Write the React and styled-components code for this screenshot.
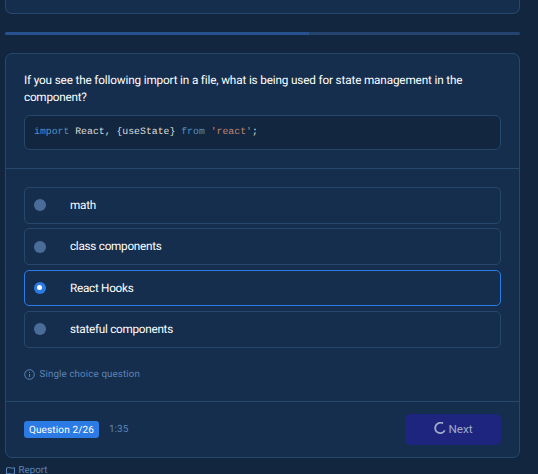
import React from "react";
import styled, { createGlobalStyle } from "styled-components";

const colors = {
  page: "#12263f",
  card: "#152e4d",
  line: "#27486d",
  blue: "#2c7be5",
  muted: "#5c84b8",
};

const GlobalStyle = createGlobalStyle`
  * { box-sizing: border-box; }
  html, body { margin: 0; height: 100%; overflow: hidden; background: ${colors.page}; }
  body { font-family: Roboto, "Liberation Sans", sans-serif; color: #fff; text-rendering: geometricPrecision; }
`;

const Page = styled.main`
  width: 538px;
  height: 474px;
  padding: 0 18px 0 5px;
  background: ${colors.page};
`;

const PreviousCard = styled.div`
  height: 14px;
  border: 1px solid ${colors.line};
  border-top: 0;
  border-radius: 0 0 7px 7px;
  background: ${colors.card};
`;

const Progress = styled.div`
  height: 3px;
  margin: 18px 0;
  border-radius: 2px;
  overflow: hidden;
  background: #24446f;
`;

const ProgressFill = styled.div`
  width: 304px;
  height: 100%;
  background: #28528f;
`;

const Card = styled.section`
  height: 405px;
  border: 1px solid ${colors.line};
  border-radius: 7px;
  background: ${colors.card};
`;

const CardHeader = styled.header`
  height: 115px;
  padding: 18px 18px 0;
  border-bottom: 1px solid ${colors.line};
`;

const Question = styled.h1`
  margin: 0 0 9px;
  font-size: 11.75px;
  line-height: 17px;
  font-weight: 400;
  white-space: nowrap;
`;

const Line = styled.span`
  display: block;
  letter-spacing: ${(p) => p.$spacing}px;
`;

const Code = styled.pre`
  margin: 0;
  height: 35px;
  padding: 0 9px;
  border: 1px solid ${colors.line};
  border-radius: 6px;
  background: ${colors.page};
  color: #dcdcdc;
  font: 9.82px/32px "Liberation Mono", monospace;
`;

const Token = styled.span`
  color: ${(p) => (p.$kind === "string" ? "#ce9178" : "#569cd6")};
  opacity: 0.9;
`;

const CardBody = styled.div`
  height: 233px;
  padding: 18px 18px 0;
  border-bottom: 1px solid ${colors.line};
`;

const Options = styled.div`
  display: grid;
  gap: 4.67px;
`;

const Option = styled.label`
  display: flex;
  align-items: center;
  height: 36.67px;
  padding: 0 9px;
  border: 1px solid ${(p) => (p.$selected ? colors.blue : colors.line)};
  border-radius: 5px;
  font-size: 11.75px;
  line-height: 15px;
  letter-spacing: -0.28px;
`;

const OptionText = styled.span`
  margin-top: 0.1px;
`;

const Radio = styled.span`
  display: flex;
  align-items: center;
  justify-content: center;
  width: 12px;
  height: 12px;
  margin-right: 24px;
  border-radius: 50%;
  background: ${(p) => (p.$selected ? colors.blue : "#4a6c98")};

  &::after {
    content: "";
    width: 5px;
    height: 5px;
    margin: 0 1px 1px 0;
    border-radius: 50%;
    background: ${(p) => (p.$selected ? "#fff" : "transparent")};
  }
`;

const Hint = styled.div`
  display: flex;
  align-items: center;
  gap: 4.5px;
  margin-top: 21px;
  height: 12px;
  line-height: 13px;
  color: ${colors.muted};
  font-size: 9.75px;
  letter-spacing: 0.13px;
`;

const CardFooter = styled.footer`
  display: flex;
  align-items: center;
  height: 55px;
  padding: 0 18px;
`;

const Badge = styled.span`
  display: flex;
  align-items: center;
  justify-content: center;
  width: 75px;
  height: 17px;
  padding-top: 1px;
  border-radius: 3px;
  background: ${colors.blue};
  font-size: 10px;
  letter-spacing: 0.15px;
`;

const Timer = styled.span`
  margin: 0 0 0 10px;
  color: ${colors.muted};
  font-size: 10px;
`;

const NextButton = styled.button`
  display: flex;
  align-items: center;
  justify-content: center;
  gap: 3px;
  width: 96px;
  height: 31px;
  margin-left: auto;
  padding: 0 0 1px;
  border: 0;
  border-radius: 5px;
  background: #1e257f;
  color: #a0abc9;
  font: 11.75px Roboto, sans-serif;
  letter-spacing: -0.1px;

  svg { margin-bottom: 2px; }
`;

const Report = styled.div`
  display: flex;
  align-items: center;
  gap: 3.5px;
  height: 10px;
  line-height: 10px;
  margin-top: 8px;
  color: ${colors.muted};
  font-size: 9.75px;
`;

const InfoIcon = () => (
  <svg width="11" height="11" viewBox="0 0 11 11" fill="none" stroke="currentColor">
    <circle cx="5.5" cy="5.5" r="4.8" />
    <path d="M5.5 5v3M5.5 3v1" />
  </svg>
);

const Spinner = () => (
  <svg width="12" height="12" viewBox="0 0 12 12" fill="none" stroke="currentColor" strokeWidth="1.8">
    <path d="M9.1 1.2C5.6-.3 1.2 1.9 1.2 6c0 5.6 7.2 6.7 9.6 2.4" />
  </svg>
);

const FlagIcon = () => (
  <svg width="10" height="10" viewBox="0 0 10 10" fill="none" stroke="currentColor">
    <path d="M1.5 10V2C4 .6 6 3 9.5 1.8v6C6 9 4 6.6 1.5 8" />
  </svg>
);

const options = [
  { text: "math" },
  { text: "class components" },
  { text: "React Hooks", selected: true },
  { text: "stateful components" },
];

export default function App() {
  return (
    <>
      <GlobalStyle />
      <Page>
        <PreviousCard />
        <Progress><ProgressFill /></Progress>
        <Card>
          <CardHeader>
            <Question>
              <Line $spacing={-0.155}>If you see the following import in a file, what is being used for state management in the</Line>
              <Line $spacing={-0.25}>component?</Line>
            </Question>
            <Code>
              <Token>import</Token>{" React, {useState} "}<Token>from</Token>{" "}<Token $kind="string">'react'</Token>;
            </Code>
          </CardHeader>
          <CardBody>
            <Options>
              {options.map((o) => (
                <Option key={o.text} $selected={o.selected}>
                  <Radio $selected={o.selected} />
                  <OptionText>{o.text}</OptionText>
                </Option>
              ))}
            </Options>
            <Hint><InfoIcon />Single choice question</Hint>
          </CardBody>
          <CardFooter>
            <Badge>Question 2/26</Badge>
            <Timer>1:35</Timer>
            <NextButton><Spinner />Next</NextButton>
          </CardFooter>
        </Card>
        <Report><FlagIcon />Report</Report>
      </Page>
    </>
  );
}
